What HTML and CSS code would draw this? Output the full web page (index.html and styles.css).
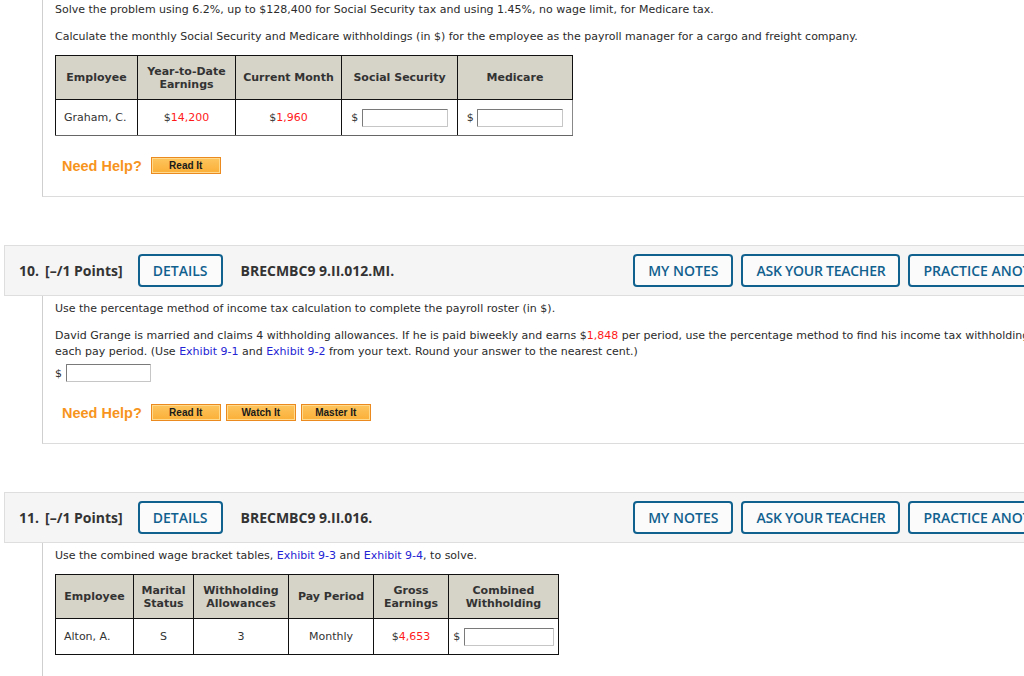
FILE: index.html
```html
<!DOCTYPE html>
<html>
<head>
<meta charset="utf-8">
<link rel="stylesheet" href="styles.css">
</head>
<body>
<div class="page">

  <div class="qbody first">
    <p class="txt">Solve the problem using 6.2%, up to $128,400 for Social Security tax and using 1.45%, no wage limit, for Medicare tax.</p>
    <p class="txt gap">Calculate the monthly Social Security and Medicare withholdings (in $) for the employee as the payroll manager for a cargo and freight company.</p>
    <table class="grid t1">
      <colgroup><col class="c82"><col class="c98"><col class="c106"><col class="c116"><col class="c115"></colgroup>
      <tr class="hrow">
        <th>Employee</th>
        <th>Year-to-Date<br>Earnings</th>
        <th>Current Month</th>
        <th>Social Security</th>
        <th>Medicare</th>
      </tr>
      <tr class="drow">
        <td class="left">Graham, C.</td>
        <td>$<span class="red">14,200</span></td>
        <td>$<span class="red">1,960</span></td>
        <td class="inp">$ <span class="box w86"></span></td>
        <td class="inp lastc">$ <span class="box w86"></span></td>
      </tr>
    </table>
    <div class="help">
      <span class="needhelp">Need Help?</span>
      <span class="hbtn">Read It</span>
    </div>
  </div>

  <div class="qhead">
    <span class="qnum">10.</span>
    <span class="qpts">[–/1 Points]</span>
    <span class="obtn details">DETAILS</span>
    <span class="qcode">BRECMBC9 9.II.012.MI.</span>
    <div class="right">
      <span class="obtn">MY NOTES</span>
      <span class="obtn tight">ASK YOUR TEACHER</span>
      <span class="obtn">PRACTICE ANOTHER</span>
    </div>
  </div>

  <div class="qbody">
    <p class="txt">Use the percentage method of income tax calculation to complete the payroll roster (in $).</p>
    <p class="txt gap wide">David Grange is married and claims 4 withholding allowances. If he is paid biweekly and earns $<span class="red">1,848</span> per period, use the percentage method to find his income tax withholding for each pay period. (Use <span class="link">Exhibit 9-1</span> and <span class="link">Exhibit 9-2</span> from your text. Round your answer to the nearest cent.)</p>
    <div class="answer"><span class="dollar">$</span><span class="box w85"></span></div>
    <div class="help">
      <span class="needhelp">Need Help?</span>
      <span class="hbtn">Read It</span>
      <span class="hbtn">Watch It</span>
      <span class="hbtn">Master It</span>
    </div>
  </div>

  <div class="qhead">
    <span class="qnum">11.</span>
    <span class="qpts">[–/1 Points]</span>
    <span class="obtn details">DETAILS</span>
    <span class="qcode">BRECMBC9 9.II.016.</span>
    <div class="right">
      <span class="obtn">MY NOTES</span>
      <span class="obtn tight">ASK YOUR TEACHER</span>
      <span class="obtn">PRACTICE ANOTHER</span>
    </div>
  </div>

  <div class="qbody last">
    <p class="txt">Use the combined wage bracket tables, <span class="link">Exhibit 9-3</span> and <span class="link">Exhibit 9-4</span>, to solve.</p>
    <table class="grid t2">
      <colgroup><col class="c78"><col class="c60"><col class="c95"><col class="c85"><col class="c75"><col class="c110"></colgroup>
      <tr class="hrow">
        <th>Employee</th>
        <th>Marital<br>Status</th>
        <th>Withholding<br>Allowances</th>
        <th>Pay Period</th>
        <th>Gross<br>Earnings</th>
        <th>Combined<br>Withholding</th>
      </tr>
      <tr class="drow">
        <td class="left">Alton, A.</td>
        <td>S</td>
        <td>3</td>
        <td>Monthly</td>
        <td>$<span class="red">4,653</span></td>
        <td class="inp">$ <span class="box w90"></span></td>
      </tr>
    </table>
  </div>

</div>
</body>
</html>
```

FILE: styles.css
```css
html, body {
  margin: 0;
  padding: 0;
  overflow: hidden;
  background: #fff;
}
body {
  font-family: "DejaVu Sans", Verdana, sans-serif;
  font-size: 11px;
  color: #2b2b2b;
}
.page {
  width: 1100px;
}
.qbody {
  margin-left: 42px;
  border-left: 1px solid #cfcfcf;
  border-bottom: 1px solid #dcdcdc;
  padding: 5px 0 22px 12px;
}
.qbody.first {
  padding-top: 2px;
}
.qbody.last {
  border-bottom: none;
  padding-bottom: 40px;
}
.txt {
  margin: 0;
  line-height: 16px;
  width: 980px;
}
.txt.wide {
  width: 1020px;
}
.txt.gap {
  margin-top: 11px;
}
.red { color: #ff1a1a; }
.link { color: #2424d4; }

.grid {
  border-collapse: collapse;
  table-layout: fixed;
  margin-top: 10px;
  color: #333;
}
.t1 { width: 518px; }
.t2 { width: 504px; }
.c82 { width: 82px; }
.c98 { width: 98px; }
.c106 { width: 106px; }
.c116 { width: 116px; }
.c115 { width: 115px; }
.c78 { width: 78px; }
.c60 { width: 60px; }
.c95 { width: 95px; }
.c85 { width: 85px; }
.c75 { width: 75px; }
.c110 { width: 110px; }
.grid th, .grid td {
  border: 1px solid #111;
  text-align: center;
  padding: 0 4px;
  line-height: 13px;
}
.grid th {
  background: #d6d3c9;
  font-weight: bold;
  color: #333;
}
.hrow { height: 44px; }
.drow { height: 36px; }
.grid td.left {
  text-align: left;
  padding-left: 8px;
}
.grid td.inp {
  white-space: nowrap;
  padding: 0;
}
.t1 td.lastc { border-right-color: #888; }
.t1 .drow td { border-bottom-color: #666; }
.box {
  display: inline-block;
  vertical-align: middle;
  height: 16px;
  border: 1px solid;
  border-color: #7a7a7a #c6c6c6 #c6c6c6 #7a7a7a;
  background: #fff;
  border-radius: 1px;
}
.w86 { width: 84px; }
.w85 { width: 83px; }
.w90 { width: 88px; }
.answer {
  margin-top: 4px;
  display: flex;
  align-items: center;
  height: 18px;
}
.dollar { width: 11px; }

.help {
  display: flex;
  align-items: center;
  margin-top: 22px;
  padding-left: 7px;
  height: 17px;
}
.first .help {
  margin-top: 21px;
}
.needhelp {
  font-family: "Liberation Sans", Arial, sans-serif;
  font-weight: bold;
  font-size: 14.5px;
  color: #f7941d;
  margin-right: 9px;
}
.hbtn {
  box-sizing: border-box;
  width: 70px;
  height: 17px;
  margin-right: 5px;
  border: 1px solid #eb8a1f;
  box-shadow: inset 0 0 0 1px #ffd98c;
  background: linear-gradient(#fdc55e, #fbaf37);
  font-family: "Liberation Sans", Arial, sans-serif;
  font-weight: bold;
  font-size: 10px;
  color: #1a1a1a;
  display: flex;
  align-items: center;
  justify-content: center;
}

.qhead {
  margin-top: 48px;
  margin-left: 4px;
  height: 49px;
  background: #f5f5f5;
  border: 1px solid #dedede;
  display: flex;
  align-items: center;
  padding-left: 14px;
  padding-right: 26px;
  font-family: "Open Sans", sans-serif;
  font-size: 14px;
  color: #333;
}
.qnum { font-weight: bold; width: 26px; }
.qpts { font-weight: bold; }
.qcode { font-weight: bold; margin-left: 18px; }
.obtn {
  box-sizing: border-box;
  height: 33px;
  border: 2px solid #11618f;
  border-radius: 4px;
  background: #fbfbfb;
  color: #11618f;
  font-weight: 600;
  padding: 0 13px;
  display: flex;
  align-items: center;
  white-space: nowrap;
}
.obtn.details {
  margin-left: 15px;
}
.obtn.tight {
  letter-spacing: -0.25px;
}
.right {
  margin-left: auto;
  display: flex;
  gap: 8px;
}
```
